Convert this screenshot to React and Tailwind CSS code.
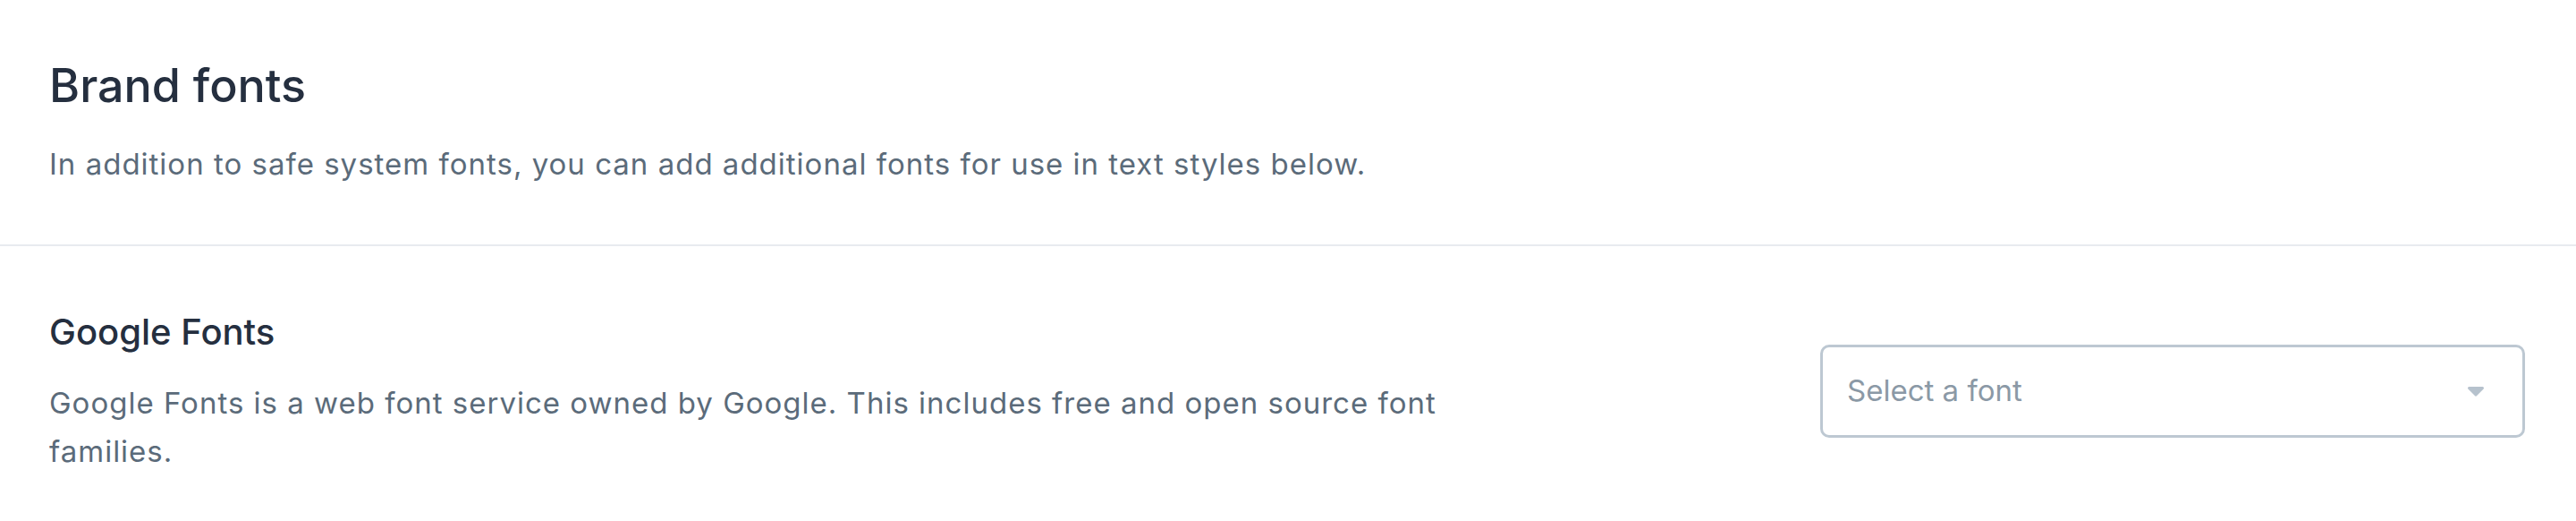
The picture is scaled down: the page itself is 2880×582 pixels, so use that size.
import React from 'react';

const font = { fontFamily: 'Inter, "Open Sans", "Liberation Sans", sans-serif' };

function Caret() {
  return (
    <svg width="20" height="12" viewBox="0 0 20 12" className="shrink-0">
      <path d="M2.5 1h15a1.5 1.5 0 0 1 1.1 2.5l-7.5 7.6a1.5 1.5 0 0 1-2.2 0L1.4 3.5A1.5 1.5 0 0 1 2.5 1z" fill="#b6c2cd" />
    </svg>
  );
}

export default function App() {
  return (
    <div className="w-full min-h-[582px] bg-white" style={font}>
      {/* Brand fonts header */}
      <section className="px-[55px] pt-[62px] pb-[63px]">
        <h1 className="text-[52px] leading-[67px] font-medium text-[#252f3f]">Brand fonts</h1>
        <p className="mt-[27px] text-[33px] leading-[54px] tracking-[1px] text-[#5b6b7a]">
          In addition to safe system fonts, you can add additional fonts for use in text styles below.
        </p>
      </section>

      <div className="h-[2px] bg-[#e8ebef]" />

      {/* Google Fonts row */}
      <section className="flex items-center justify-between pl-[55px] pr-[57px] pt-[68px] pb-[50px]">
        <div className="max-w-[1560px]">
          <h2 className="text-[40px] leading-[56px] font-medium text-[#252f3f]">Google Fonts</h2>
          <p className="mt-[24px] text-[33px] leading-[54px] tracking-[1px] text-[#5b6b7a]">
            Google Fonts is a web font service owned by Google. This includes free and open source font families.
          </p>
        </div>
        <button className="flex h-[104px] w-[788px] shrink-0 items-center justify-between rounded-[10px] border-[3px] border-[#bdc8d2] bg-white pl-[27px] pr-[42px] text-left">
          <span className="text-[33px] text-[#8b99a6]">Select a font</span>
          <Caret />
        </button>
      </section>
    </div>
  );
}
